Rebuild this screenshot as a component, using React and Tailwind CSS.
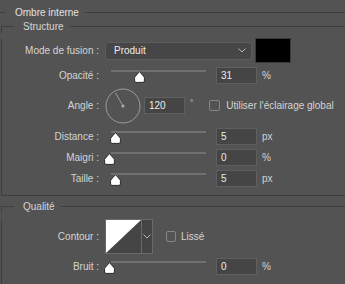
import React from 'react';

const LINE = 'bg-[#3e3e3e]';

const Thumb = ({ left }) => (
  <svg className={`absolute top-[4px] ${left}`} width="11" height="12" viewBox="0 0 11 12">
    <path d="M5.5 0.6 L10.4 6.2 V10 Q10.4 11.4 9 11.4 H2 Q0.6 11.4 0.6 10 V6.2 Z" fill="#ffffff" stroke="#2a2a2a" strokeWidth="1" />
  </svg>
);

const Slider = ({ left }) => (
  <div className="relative w-[103px] h-[17px] ml-[5px] shrink-0">
    <div className="absolute top-[3px] left-[7px] w-[95px] h-[2px] bg-[#707070]" />
    <Thumb left={left} />
  </div>
);

const NumBox = ({ value, className = 'ml-[9px]' }) => (
  <div className={`${className} w-[41px] h-[17px] shrink-0 bg-[#454545] border border-[#5f5f5f] pl-[4px] leading-[15px] text-[#ececec]`}>
    {value}
  </div>
);

const Label = ({ children }) => (
  <div className="w-[97px] shrink-0 text-right">{children}</div>
);

const SliderRow = ({ label, left, value, unit, h = 'h-[21px]' }) => (
  <div className={`flex items-center ${h}`}>
    <Label>{label}</Label>
    <Slider left={left} />
    <NumBox value={value} />
    <span className="ml-[5px]">{unit}</span>
  </div>
);

const GroupHeader = ({ title, className = '' }) => (
  <div className={`flex items-center h-[13px] leading-[13px] ${className}`}>
    <div className="self-end h-[7px] w-[13px] ml-px border-l border-t border-[#3e3e3e]" />
    <span className="ml-[9px]">{title}</span>
    <div className={`flex-1 h-px ml-[6px] ${LINE}`} />
  </div>
);

const Chevron = () => (
  <svg width="8" height="5" viewBox="0 0 8 5">
    <path d="M0.5 0.5 L4 4 L7.5 0.5" fill="none" stroke="#b4b4b4" strokeWidth="1" />
  </svg>
);

export default function App() {
  return (
    <div className="w-[345px] h-[284px] overflow-hidden bg-[#535353] text-[#d4d4d4] text-[10px] font-['Liberation_Sans',Arial,sans-serif] pt-[6px]">
      {/* Ombre interne */}
      <div className="flex items-center h-[13px] leading-[13px]">
        <div className={`w-[5px] h-px ${LINE}`} />
        <span className="ml-[10px] text-[#e2e2e2]">Ombre interne</span>
        <div className={`flex-1 h-px ml-[6px] ${LINE}`} />
      </div>

      {/* Structure */}
      <GroupHeader title="Structure" className="mt-px" />
      <div className="ml-px border-l border-b border-[#3e3e3e] pb-[6px]">
        <div className="flex items-center h-[25px] mt-[5px]">
          <Label>Mode de fusion :</Label>
          <div className="ml-[6px] w-[147px] h-[18px] rounded-[3px] bg-[#464646] border border-[#5c5c5c] flex items-center justify-between pl-[8px] pr-[5px] text-[#ececec]">
            <span>Produit</span>
            <Chevron />
          </div>
          <div className="ml-[3px] w-[36px] h-[25px] bg-black border border-[#3a3a3a]" />
        </div>

        <SliderRow label="Opacité :" left="left-[30px]" value="31" unit="%" h="h-[25px]" />

        <div className="flex items-center h-[35px]">
          <Label>Angle :</Label>
          <svg className="ml-[6px] shrink-0" width="36" height="36" viewBox="0 0 36 36">
            <circle cx="18" cy="18" r="17" fill="none" stroke="#9c9c9c" strokeWidth="1" />
            <line x1="18" y1="18" x2="10.5" y2="5" stroke="#9c9c9c" strokeWidth="1" />
            <circle cx="18" cy="18" r="1.6" fill="#a8a8a8" />
          </svg>
          <NumBox value="120" className="ml-[3px]" />
          <span className="ml-[5px] self-start mt-[11px] text-[8px] leading-[8px]">°</span>
          <div className="ml-[16px] w-[11px] h-[11px] rounded-[2px] border border-[#858585]" />
          <span className="ml-[6px]">Utiliser l'éclairage global</span>
        </div>

        <div className="mt-[3px]">
          <SliderRow label="Distance :" left="left-[6px]" value="5" unit="px" />
          <SliderRow label="Maigri :" left="left-[0px]" value="0" unit="%" />
          <SliderRow label="Taille :" left="left-[6px]" value="5" unit="px" />
        </div>
      </div>

      {/* Qualité */}
      <GroupHeader title="Qualité" className="mt-[4px]" />
      <div className="ml-px border-l border-[#3e3e3e] pb-[10px]">
        <div className="flex items-center h-[35px] mt-[6px]">
          <Label>Contour :</Label>
          <div className="ml-[6px] flex w-[48px] h-[35px] border border-[#6a6a6a] bg-[#454545]">
            <svg width="35" height="33" viewBox="0 0 35 33" className="shrink-0">
              <polygon points="0,0 35,0 0,33" fill="#ffffff" />
            </svg>
            <div className="flex-1 border-l border-[#6a6a6a] flex items-center justify-center">
              <Chevron />
            </div>
          </div>
          <div className="ml-[13px] w-[10px] h-[11px] rounded-[2px] border border-[#858585]" />
          <span className="ml-[5px]">Lissé</span>
        </div>
        <div className="mt-[2px]">
          <SliderRow label="Bruit :" left="left-[0px]" value="0" unit="%" />
        </div>
      </div>
    </div>
  );
}
